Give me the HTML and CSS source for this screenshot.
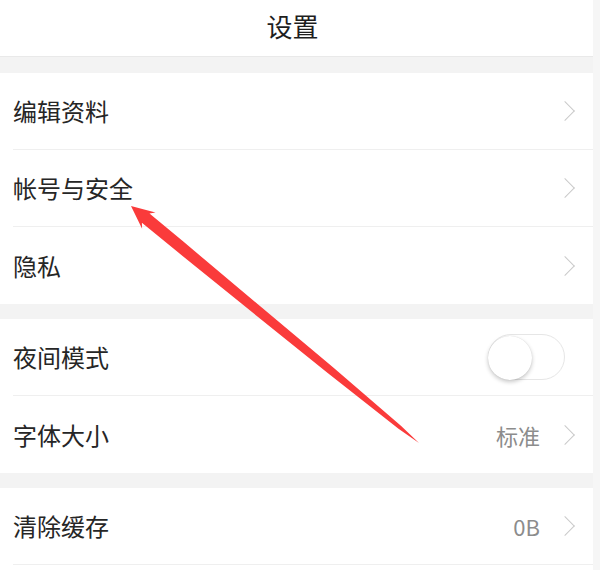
FILE: index.html
```html
<!DOCTYPE html>
<html lang="zh-CN">
<head>
<meta charset="utf-8">
<title>设置</title>
<link rel="stylesheet" href="styles.css">
</head>
<body>
<div class="page">
  <header class="topbar"><h1 class="title">设置</h1></header>
  <div class="band band-top"></div>
  <section class="group">
    <div class="row"><span class="label">编辑资料</span><span class="chev"></span></div>
    <div class="row"><span class="label">帐号与安全</span><span class="chev"></span></div>
    <div class="row last"><span class="label">隐私</span><span class="chev"></span></div>
  </section>
  <div class="band"></div>
  <section class="group">
    <div class="row"><span class="label">夜间模式</span><span class="toggle"><span class="knob"></span></span></div>
    <div class="row last"><span class="label">字体大小</span><span class="value">标准</span><span class="chev"></span></div>
  </section>
  <div class="band"></div>
  <section class="group">
    <div class="row"><span class="label">清除缓存</span><span class="value">0B</span><span class="chev"></span></div>
  </section>
</div>
<svg class="arrow" width="600" height="570" viewBox="0 0 600 570" xmlns="http://www.w3.org/2000/svg">
  <polygon fill="#fa3b3b" points="131,206 155.5,212.5 149.5,213.5 183.3,241.6 332.7,367.1 400.9,425.8 419,443 398.5,428.8 327.7,373.1 175.9,250.6 141.9,222.7 142.1,228.7"/>
</svg>
</body>
</html>
```
FILE: styles.css
```css
html, body {
  margin: 0;
  padding: 0;
  background: #f6f6f6;
  font-family: "Noto Sans CJK SC", "Noto Sans", sans-serif;
}
.page {
  width: 593px;
  height: 570px;
  overflow: hidden;
  background: #ffffff;
}
.topbar {
  height: 56px;
  border-bottom: 1px solid #e9e9e9;
  display: flex;
  align-items: center;
  justify-content: center;
  background: #fff;
}
.title {
  margin: 0 8px 5px 0;
  font-size: 26px;
  font-weight: 400;
  color: #1e1e1e;
  line-height: 1;
}
.band {
  height: 15px;
  background: #f3f3f3;
}
.band-top {
  height: 16px;
}
.group {
  background: #fff;
}
.row {
  height: 77px;
  box-sizing: border-box;
  margin-left: 13px;
  padding-right: 18px;
  border-bottom: 1px solid #efefef;
  display: flex;
  align-items: center;
}
.row.last {
  border-bottom: none;
}
.label {
  flex: 1;
  font-size: 24px;
  color: #262626;
  line-height: 1;
}
.value {
  font-size: 22px;
  color: #8c8c8c;
  margin-right: 24px;
  line-height: 1;
}
.chev {
  width: 11px;
  height: 20px;
  position: relative;
  display: inline-block;
}
.chev::before {
  content: "";
  position: absolute;
  left: -6px;
  top: 3px;
  width: 13px;
  height: 13px;
  border-top: 1.5px solid #cacaca;
  border-right: 1.5px solid #cacaca;
  transform: rotate(45deg);
  transform-origin: center;
}
.toggle {
  width: 77px;
  height: 46px;
  box-sizing: border-box;
  border: 1.5px solid #e6e6e6;
  border-radius: 23px;
  background: #fff;
  display: flex;
  align-items: center;
  margin-right: 10px;
}
.knob {
  width: 44px;
  height: 44px;
  border-radius: 50%;
  background: #fff;
  box-shadow: 0 2px 4px rgba(0, 0, 0, 0.22), 0 0 1px rgba(0, 0, 0, 0.15);
  margin-left: -1px;
  margin-top: 2px;
}
.arrow {
  position: absolute;
  left: 0;
  top: 0;
  pointer-events: none;
}
```
